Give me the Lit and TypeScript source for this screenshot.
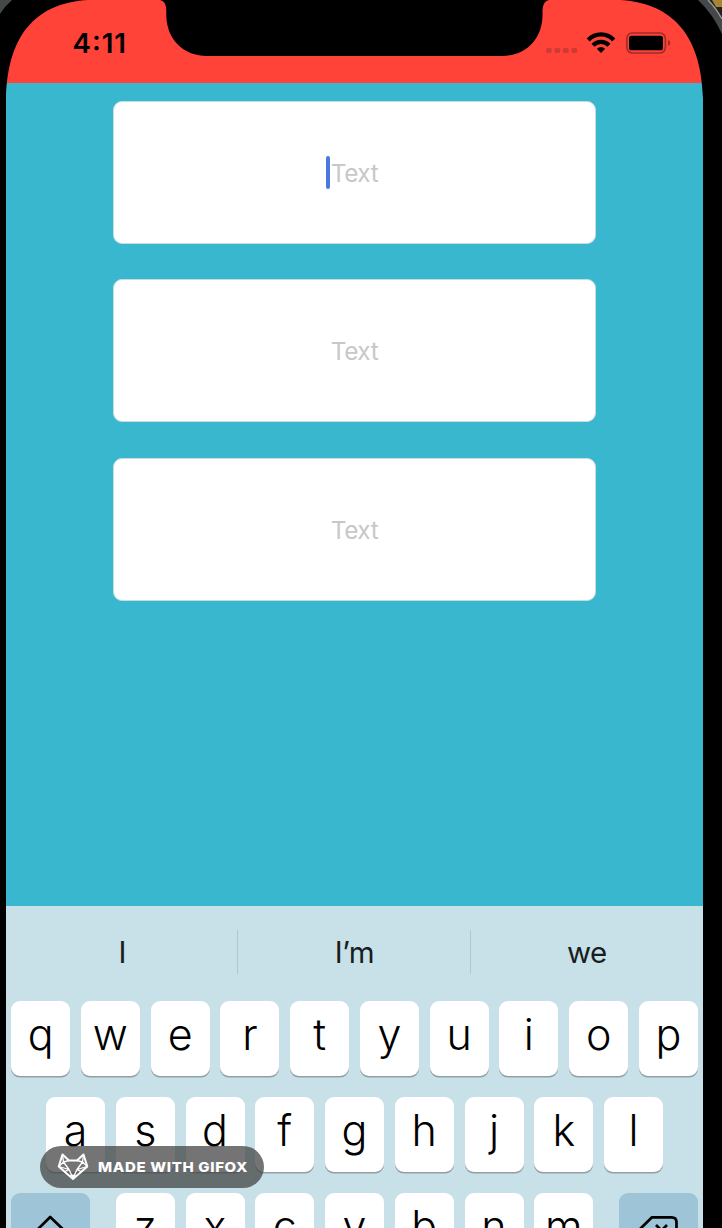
import { LitElement, html, css, svg } from "lit";
import { customElement, property } from "lit/decorators.js";

@customElement("status-bar")
class StatusBar extends LitElement {
  static styles = css`
    :host { display: block; height: 83px; background: #ff4338; }
    .art { display: block; width: 722px; height: 83px; }
    .time { font: 600 27.6px "Inter", sans-serif; }
  `;
  render() {
    return html`<svg class="art" viewBox="0 0 722 83">
      <path d="M160 0Q166 1 166.3 10V16C167 40 184 56 207 56H502C525 56 542 40 542.5 16V10Q543 1 549 0Z" fill="#000"/>
      <text class="time" x="72.5" y="53.2" textLength="53.5">4:11</text>
      ${[546, 554.5, 563, 571.5].map((x) => svg`<rect x=${x} y="48" width="5.6" height="5" rx="1.5" fill="#cf3a32"/>`)}
      <g fill="none" stroke="#000" stroke-width="4.3">
        <path d="M588.2 39.9C595.4 32.6 606.6 32.6 613.8 39.9"/>
        <path d="M593 45.2C597.6 40.7 604.4 40.7 609 45.2"/>
      </g>
      <path d="M596.8 48.8Q601 45.2 605.2 48.8L601 53Z"/>
      <rect x="626.8" y="33" width="38.6" height="20" rx="5.5" fill="none" stroke="#a22c26" stroke-width="1.7"/>
      <rect x="629" y="35.7" width="34" height="14.6" rx="2.6" fill="#000"/>
      <path d="M668 40Q670.4 41 670.4 43T668 46Z" fill="#a22c26"/>
    </svg>`;
  }
}

@customElement("text-box")
class TextBox extends LitElement {
  static styles = css`
    :host { display: block; }
    .box { position: relative; box-sizing: border-box; width: 483px; height: 143px; padding-top: 1px; border: 1px solid #c4dde3; border-radius: 9px; background: #fff; display: flex; align-items: center; justify-content: center; font: 400 24.3px Inter, sans-serif; color: #c6c8ca; letter-spacing: -0.4px; }
    .caret { position: absolute; left: 212px; top: 54px; width: 3.6px; height: 33px; border-radius: 2px; background: #4b78df; }
  `;
  @property({ type: Boolean }) active = false;
  render() {
    return html`<div class="box">${this.active ? html`<span class="caret"></span>` : ""}<span>Text</span></div>`;
  }
}

@customElement("soft-keyboard")
class SoftKeyboard extends LitElement {
  static styles = css`
    :host { display: block; height: 322px; background: #c8e0e7; font-family: Inter, sans-serif; overflow: hidden; }
    .suggestions { display: grid; grid-template-columns: 1fr 1fr 1fr; height: 44px; padding-top: 24px; margin-bottom: 26.8px; }
    .word { display: flex; align-items: center; justify-content: center; font-size: 29.5px; color: #171d20; letter-spacing: -0.5px; padding-left: 1px; border-right: 1px solid #b2c8cf; }
    .word:last-child { border-color: transparent; }
    .row { display: flex; justify-content: center; gap: 10.75px; margin-bottom: 21.2px; }
    .key { box-sizing: border-box; width: 59px; height: 75px; padding-bottom: 9px; border-radius: 9px; background: #fff; box-shadow: 0 1.6px 0 #929fa5; display: flex; align-items: center; justify-content: center; font-size: 43px; font-weight: 300; color: #000; flex: none; }
    .wide { width: 79px; background: #9dc5d7; padding: 0; }
    .shift { margin-right: 14.7px; }
    .delete { margin-left: 14.7px; }
    .glyph { width: 79px; height: 75px; fill: none; stroke: #000; stroke-width: 2.7; }
  `;
  key(c: string) { return html`<div class="key">${c}</div>`; }
  render() {
    return html`
      <div class="suggestions">${["I", "I’m", "we"].map((w) => html`<div class="word">${w}</div>`)}</div>
      <div class="row">${[..."qwertyuiop"].map(this.key)}</div>
      <div class="row">${[..."asdfghjkl"].map(this.key)}</div>
      <div class="row">
        <div class="key wide shift"><svg class="glyph" viewBox="0 0 79 75"><path d="M39.2 24L22 41H31V54H48V41H57Z" stroke-linejoin="round"/></svg></div>
        ${[..."zxcvbnm"].map(this.key)}
        <div class="key wide delete"><svg class="glyph" viewBox="0 0 79 75"><path d="M33 24.3H52.5Q57.5 24.3 57.5 29V45Q57.5 50 52.5 50H33L20 37Z" stroke-linejoin="round"/><path d="M37 32L48 43M48 32L37 43"/></svg></div>
      </div>`;
  }
}

@customElement("gifox-badge")
class GifoxBadge extends LitElement {
  static styles = css`
    :host { display: block; }
    .badge { width: 224px; height: 42px; border-radius: 21px; background: rgba(65, 65, 65, 0.73); }
    .art { display: block; }
    .label { font: 800 13.8px Inter, sans-serif; letter-spacing: 0.6px; fill: #fff; }
  `;
  render() {
    return html`<div class="badge"><svg class="art" width="224" height="42" viewBox="0 0 224 42">
      <g fill="none" stroke="#fff" stroke-linejoin="round">
        <path stroke-width="2" d="M22.5 8.5L29 14.5H37L43.5 8.5L47.3 20.5L33 33L18.7 20.5Z"/>
        <path stroke-width="1.3" d="M22.5 8.5L23.5 16L18.7 20.5M43.5 8.5L42.5 16L47.3 20.5M23.5 16L29 23.5L33 32L37 23.5L42.5 16M29 14.5L23.5 16M37 14.5L42.5 16M18.7 20.5L29 23.5L24 26M47.3 20.5L37 23.5L42 26"/>
        <path fill="#fff" stroke-width="1" d="M30 30L33 29L36 30L33 33Z"/>
      </g>
      <text class="label" x="58" y="26" textLength="150" lengthAdjust="spacingAndGlyphs">MADE WITH GIFOX</text>
    </svg></div>`;
  }
}

@customElement("app-root")
class AppRoot extends LitElement {
  static styles = css`
    :host { display: block; width: 722px; height: 1228px; overflow: hidden; position: relative; background: #000; }
    .fields { height: 823px; box-sizing: border-box; margin: 0 19px 0 6px; padding: 17.7px 0 0 107px; background: #39b7cf; display: flex; flex-direction: column; gap: 35.6px; }
    .keyboard { margin: 0 19px 0 6px; }
    .bezel { position: absolute; left: 0; top: 0; width: 722px; height: 110px; }
    .badge { position: absolute; left: 40px; top: 1146px; }
  `;
  render() {
    return html`
      <status-bar></status-bar>
      <div class="fields"><text-box active></text-box><text-box></text-box><text-box></text-box></div>
      <soft-keyboard class="keyboard"></soft-keyboard>
      <svg class="bezel" viewBox="0 0 722 110">
        <path d="M0 0H88C40 3 8 30 6 98V110H0Z"/>
        <path d="M722 0H620C668 3 701 30 703 98V110H722Z"/>
        <path d="M0 0H12Q5 6 0 14Z" fill="#444848"/>
        <path d="M698 0H722V34Q713 14 698 0Z" fill="#444848"/>
        <path d="M709 0H722V19Q717 8 709 0Z" fill="#222"/>
        <path d="M708 0Q716 8 722 19" fill="none" stroke="#999" stroke-width="1.5"/>
        <path d="M712 0H722V7H716Z" fill="#a88530"/>
      </svg>
      <gifox-badge class="badge"></gifox-badge>`;
  }
}
